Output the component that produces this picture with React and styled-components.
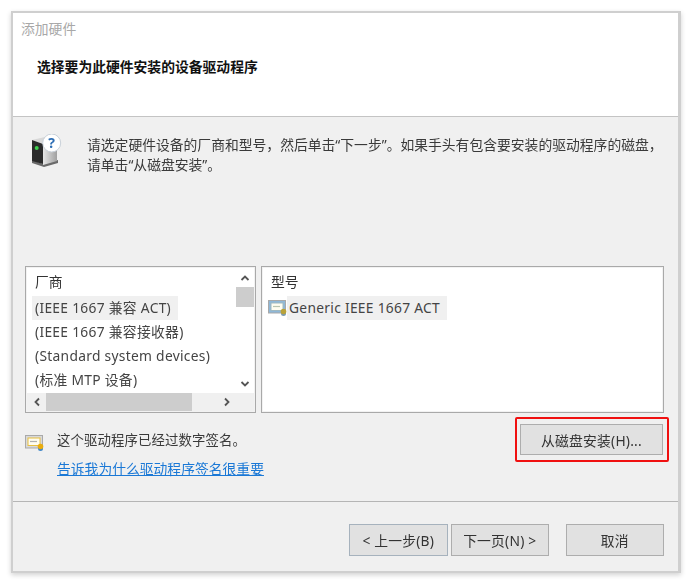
import React from "react";
import styled, { createGlobalStyle } from "styled-components";

const Global = createGlobalStyle`
  html, body { margin: 0; padding: 0; background: #fff; }
  body { font-family: "Noto Sans", "Noto Sans CJK SC", sans-serif; color: #333; }
`;

const Page = styled.div`
  width: 690px;
  height: 584px;
  box-sizing: border-box;
  padding: 11px 9px 11px 11px;
  filter: blur(0.5px);
`;

const Window = styled.div`
  width: 670px;
  height: 562px;
  box-sizing: border-box;
  display: flex;
  flex-direction: column;
  background: #f0f0f0;
  border: 2px solid #cfcfcf;
  border-right-width: 3px;
  box-shadow: 0 2px 5px rgba(0, 0, 0, 0.18);
`;

const Header = styled.header`
  height: 104px;
  flex: none;
  box-sizing: border-box;
  background: #fff;
  border-bottom: 1px solid #c4c4c4;
  padding: 6px 0 0 8px;
`;

const WindowTitle = styled.div`
  font-size: 13.8px;
  line-height: 20px;
  color: #a8a8a8;
`;

const Heading = styled.h1`
  margin: 18px 0 0 16px;
  font-size: 13.8px;
  line-height: 20px;
  font-weight: 700;
  color: #111;
`;

const Body = styled.main`
  flex: 1;
  display: flex;
  flex-direction: column;
  padding: 17px 9px 0 12px;
  min-height: 0;
`;

const Intro = styled.section`
  display: flex;
  height: 132px;
  flex: none;
  gap: 23px;
  padding-left: 3px;
`;

const IntroIcon = styled.svg`
  width: 36px;
  height: 38px;
  flex: none;
`;

const IntroText = styled.p`
  margin: 0;
  padding-top: 1px;
  font-size: 13.8px;
  line-height: 20px;
  white-space: nowrap;
  color: #3a3a3a;
`;

const Lists = styled.section`
  display: flex;
  gap: 5px;
  height: 147px;
  flex: none;
`;

const ListBox = styled.div`
  box-sizing: border-box;
  width: ${(p) => p.$width}px;
  height: 100%;
  background: #fff;
  border: 1px solid #a9a9a9;
  box-shadow: inset 0 0 0 1px #f2f2f2;
  display: ${(p) => (p.$grid ? "grid" : "block")};
  grid-template-columns: 1fr 18px;
  grid-template-rows: 1fr 18px;
  padding: 1px;
`;

const ListContent = styled.div`
  padding: 2px 0 0 5px;
  overflow: hidden;
  min-width: 0;
`;

const ListHead = styled.div`
  font-size: 13.8px;
  line-height: 24px;
  height: 24px;
  margin-bottom: 2px;
  padding-left: 3px;
  color: #333;
`;

const Row = styled.div`
  display: flex;
  align-items: center;
  height: 24px;
`;

const ItemText = styled.span`
  display: inline-block;
  font-size: 13.8px;
  line-height: 24px;
  letter-spacing: 0.29px;
  padding: 0 ${(p) => (p.$selected ? 7 : 0)}px 0 ${(p) => p.$inset ?? 3}px;
  white-space: nowrap;
  background: ${(p) => (p.$selected ? "#f0f0f0" : "transparent")};
  color: #444;
`;

const VBar = styled.div`
  background: #fff;
  display: flex;
  flex-direction: column;
`;

const ArrowBtn = styled.div`
  flex: none;
  width: ${(p) => p.$w || 18}px;
  height: ${(p) => p.$h || 18}px;
  display: flex;
  align-items: center;
  justify-content: center;
`;

const VThumb = styled.div`
  height: 20px;
  background: #cdcdcd;
`;

const Spacer = styled.div`
  flex: 1;
`;

const HBar = styled.div`
  display: flex;
  align-items: center;
  background: #f0f0f0;
`;

const Corner = styled.div`
  background: #f0f0f0;
`;

const HThumb = styled.div`
  width: 146px;
  height: 18px;
  background: #cdcdcd;
`;

const Arrow = ({ dir }) => {
  const d = {
    up: "M1.5 7 L5 3.5 L8.5 7",
    down: "M1.5 3 L5 6.5 L8.5 3",
    left: "M7 1.5 L3.5 5 L7 8.5",
    right: "M3 1.5 L6.5 5 L3 8.5",
  }[dir];
  return (
    <svg width="10" height="10" viewBox="0 0 10 10" fill="none" stroke="#555" strokeWidth="1.8">
      <path d={d} />
    </svg>
  );
};

const Bottom = styled.section`
  display: flex;
  justify-content: space-between;
  height: 88px;
  flex: none;
`;

const SignInfo = styled.div`
  display: grid;
  grid-template-columns: 19px auto;
  column-gap: 13px;
  grid-auto-rows: 29px;
  padding-top: 16px;
  align-content: start;
`;

const SignIcon = styled.div`
  margin-top: 5px;
`;

const SignText = styled.span`
  font-size: 13.4px;
  line-height: 22px;
  letter-spacing: 0.1px;
  color: #3a3a3a;
`;

const SignLink = styled.a`
  grid-column: 2;
  font-size: 13.8px;
  line-height: 22px;
  color: #1a78d6;
  text-decoration: underline;
`;

const Highlight = styled.div`
  box-sizing: border-box;
  width: 154px;
  height: 45px;
  margin-top: 4px;
  padding: 5px 4px 5px 3px;
  border: 2px solid #f01010;
  border-radius: 2px;
`;

const Button = styled.button`
  box-sizing: border-box;
  display: block;
  width: ${(p) => p.$width || 98.5}px;
  height: ${(p) => p.$height || 32}px;
  margin-left: ${(p) => p.$gap || 0}px;
  padding: 0;
  background: #e1e1e1;
  border: 1px solid ${(p) => (p.$primary ? "#a6b2bd" : "#adadad")};
  font-family: inherit;
  font-size: 13.8px;
  letter-spacing: 0.2px;
  color: #333;
`;

const Footer = styled.footer`
  flex: 1;
  display: flex;
  justify-content: flex-end;
  align-items: flex-start;
  border-top: 1px solid #b5b5b5;
  margin: 0 -9px 0 -12px;
  padding: 22px 14px 0 0;
`;

const FooterButtons = styled.div`
  display: flex;
`;

const ServerIcon = () => (
  <IntroIcon viewBox="0 0 36 38">
    <defs>
      <linearGradient id="side" x1="0" x2="1">
        <stop offset="0" stopColor="#e6e6e6" />
        <stop offset="1" stopColor="#a0a0a0" />
      </linearGradient>
    </defs>
    <path d="M4 26 L4 29 L16 33 L30 29 L30 26 L15 30 Z" fill="#6a6a6a" />
    <path d="M4 6 L17 3 L29 6 L15 10 Z" fill="#d8d8d8" />
    <path d="M15 10 L29 6 L29 27 L15 31 Z" fill="url(#side)" />
    <path d="M4 6 L15 10 L15 30 L4 27 Z" fill="#2b2b2b" />
    <circle cx="8.7" cy="14" r="2" fill="#3fd24f" />
    <circle cx="23.7" cy="9" r="9" fill="#fff" stroke="#c8d0d8" />
    <text x="23.7" y="14" fontSize="14" fontWeight="700" fontFamily="Noto Sans" textAnchor="middle" fill="#2f6fb5">?</text>
  </IntroIcon>
);

const CertIcon = ({ frame, inner, line, seal, drop }) => (
  <svg width="19" height="16" viewBox="0 0 19 16">
    <rect x="0.5" y="0.5" width="17" height="12.5" fill={frame} stroke="#a9a9a9" />
    <rect x="3" y="3" width="12" height="7.5" fill="#fffdf0" stroke={inner} />
    <path d="M5 6.5 H12" stroke={line} strokeWidth="1.2" />
    <circle cx="15.5" cy="13.5" r="2.5" fill={drop} />
    <circle cx="15.5" cy="11.5" r="2.8" fill={seal} />
  </svg>
);

export default function App() {
  return (
    <Page>
      <Global />
      <Window>
        <Header>
          <WindowTitle>添加硬件</WindowTitle>
          <Heading>选择要为此硬件安装的设备驱动程序</Heading>
        </Header>
        <Body>
          <Intro>
            <ServerIcon />
            <IntroText>
              请选定硬件设备的厂商和型号，然后单击“下一步”。如果手头有包含要安装的驱动程序的磁盘，
              <br />
              请单击“从磁盘安装”。
            </IntroText>
          </Intro>
          <Lists>
            <ListBox $width={231} $grid>
              <ListContent>
                <ListHead>厂商</ListHead>
                <Row><ItemText $selected>(IEEE 1667 兼容 ACT)</ItemText></Row>
                <Row><ItemText>(IEEE 1667 兼容接收器)</ItemText></Row>
                <Row><ItemText>(Standard system devices)</ItemText></Row>
                <Row><ItemText>(标准 MTP 设备)</ItemText></Row>
              </ListContent>
              <VBar>
                <ArrowBtn $h={19}><Arrow dir="up" /></ArrowBtn>
                <VThumb />
                <Spacer />
                <ArrowBtn $h={19}><Arrow dir="down" /></ArrowBtn>
              </VBar>
              <HBar>
                <ArrowBtn $w={19}><Arrow dir="left" /></ArrowBtn>
                <HThumb />
                <Spacer />
                <ArrowBtn><Arrow dir="right" /></ArrowBtn>
              </HBar>
              <Corner />
            </ListBox>
            <ListBox $width={403}>
              <ListContent>
                <ListHead>型号</ListHead>
                <Row>
                  <CertIcon frame="#8fb8d8" inner="#9fb8c0" line="#b8c4b0" seal="#b9a23a" drop="#7a9ab0" />
                  <ItemText $selected $inset={2}>Generic IEEE 1667 ACT</ItemText>
                </Row>
              </ListContent>
            </ListBox>
          </Lists>
          <Bottom>
            <SignInfo>
              <SignIcon>
                <CertIcon frame="#d9d9d9" inner="#e8c040" line="#b0b0b0" seal="#e8ac0e" drop="#3f86c8" />
              </SignIcon>
              <SignText>这个驱动程序已经过数字签名。</SignText>
              <SignLink href="#">告诉我为什么驱动程序签名很重要</SignLink>
            </SignInfo>
            <Highlight>
              <Button $width={143} $height={31}>从磁盘安装(H)...</Button>
            </Highlight>
          </Bottom>
          <Footer>
            <FooterButtons>
              <Button $primary>&lt; 上一步(B)</Button>
              <Button $gap={3}>下一页(N) &gt;</Button>
              <Button $gap={16.5}>取消</Button>
            </FooterButtons>
          </Footer>
        </Body>
      </Window>
    </Page>
  );
}
